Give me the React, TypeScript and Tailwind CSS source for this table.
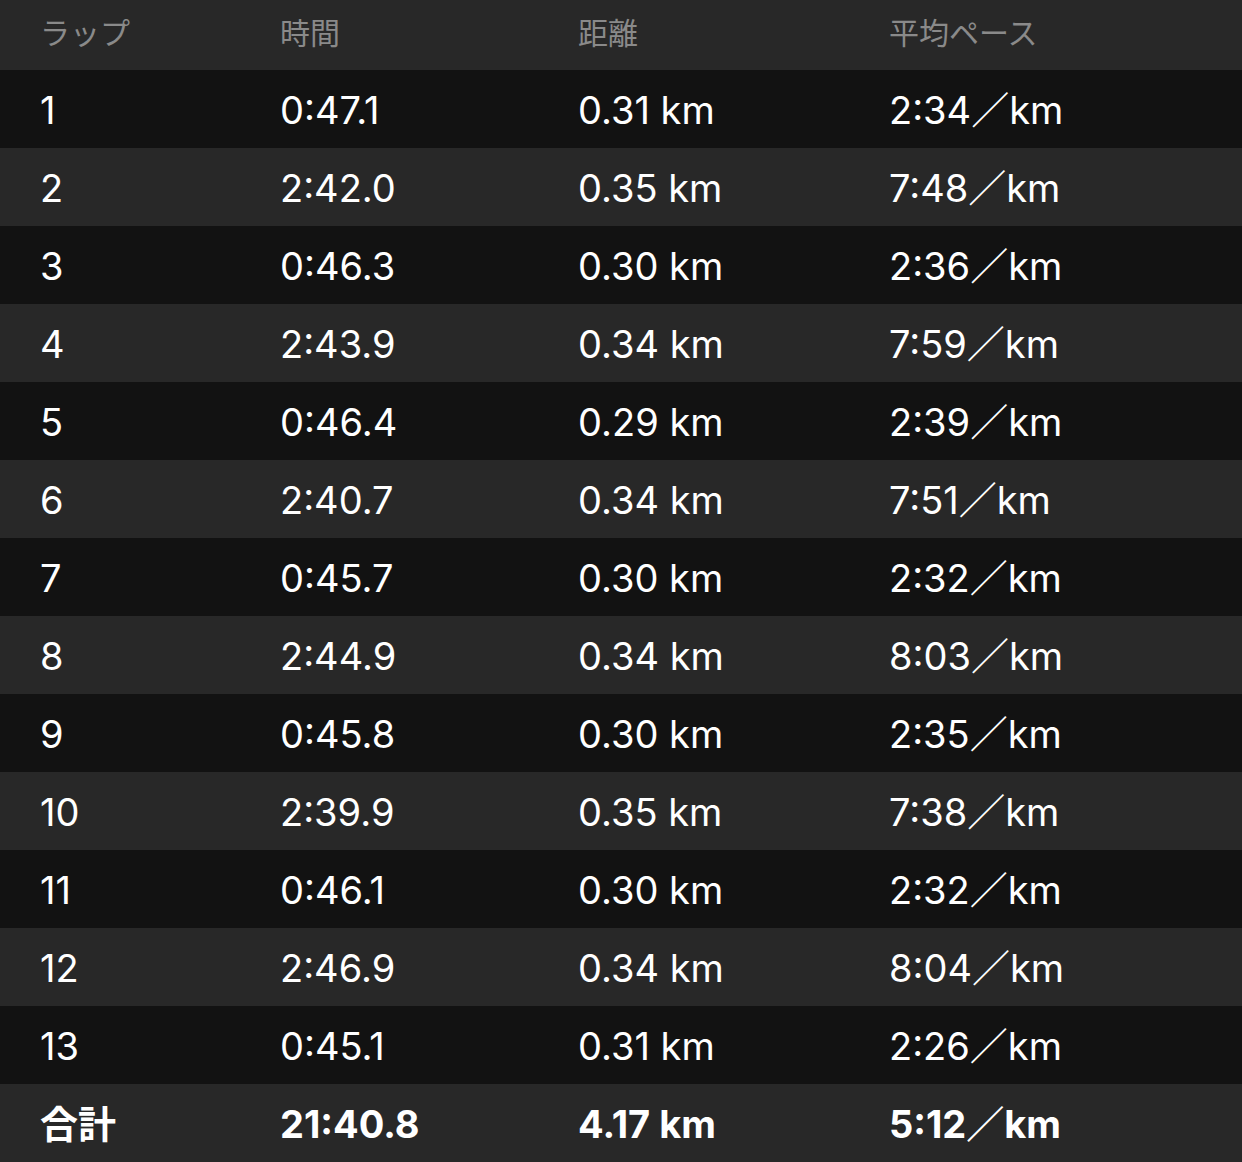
const laps = [
  ["1", "0:47.1", "0.31 km", "2:34／km"],
  ["2", "2:42.0", "0.35 km", "7:48／km"],
  ["3", "0:46.3", "0.30 km", "2:36／km"],
  ["4", "2:43.9", "0.34 km", "7:59／km"],
  ["5", "0:46.4", "0.29 km", "2:39／km"],
  ["6", "2:40.7", "0.34 km", "7:51／km"],
  ["7", "0:45.7", "0.30 km", "2:32／km"],
  ["8", "2:44.9", "0.34 km", "8:03／km"],
  ["9", "0:45.8", "0.30 km", "2:35／km"],
  ["10", "2:39.9", "0.35 km", "7:38／km"],
  ["11", "0:46.1", "0.30 km", "2:32／km"],
  ["12", "2:46.9", "0.34 km", "8:04／km"],
  ["13", "0:45.1", "0.31 km", "2:26／km"],
];

const cols = "grid grid-cols-[240px_298px_311px_1fr] pl-10 items-center";

export default function App() {
  return (
    <div
      className="w-[1242px] bg-[#121212] text-white"
      style={{ fontFamily: '"Inter", "Noto Sans CJK JP", sans-serif' }}
    >
      <div className={`${cols} h-[70px] bg-[#282828] text-[#8a8a8a] text-[30px] pb-1`}>
        <div>ラップ</div>
        <div>時間</div>
        <div>距離</div>
        <div>平均ペース</div>
      </div>

      {laps.map((lap, i) => (
        <div
          key={lap[0]}
          className={`${cols} h-[78px] text-[38px] pt-[3px] ${
            i % 2 === 0 ? "bg-[#121212]" : "bg-[#282828]"
          }`}
        >
          {lap.map((cell, j) => (
            <div key={j}>{cell}</div>
          ))}
        </div>
      ))}

      <div className={`${cols} h-[78px] bg-[#282828] text-[38px] pt-[3px] font-bold`}>
        <div>合計</div>
        <div>21:40.8</div>
        <div>4.17 km</div>
        <div>5:12／km</div>
      </div>
    </div>
  );
}
